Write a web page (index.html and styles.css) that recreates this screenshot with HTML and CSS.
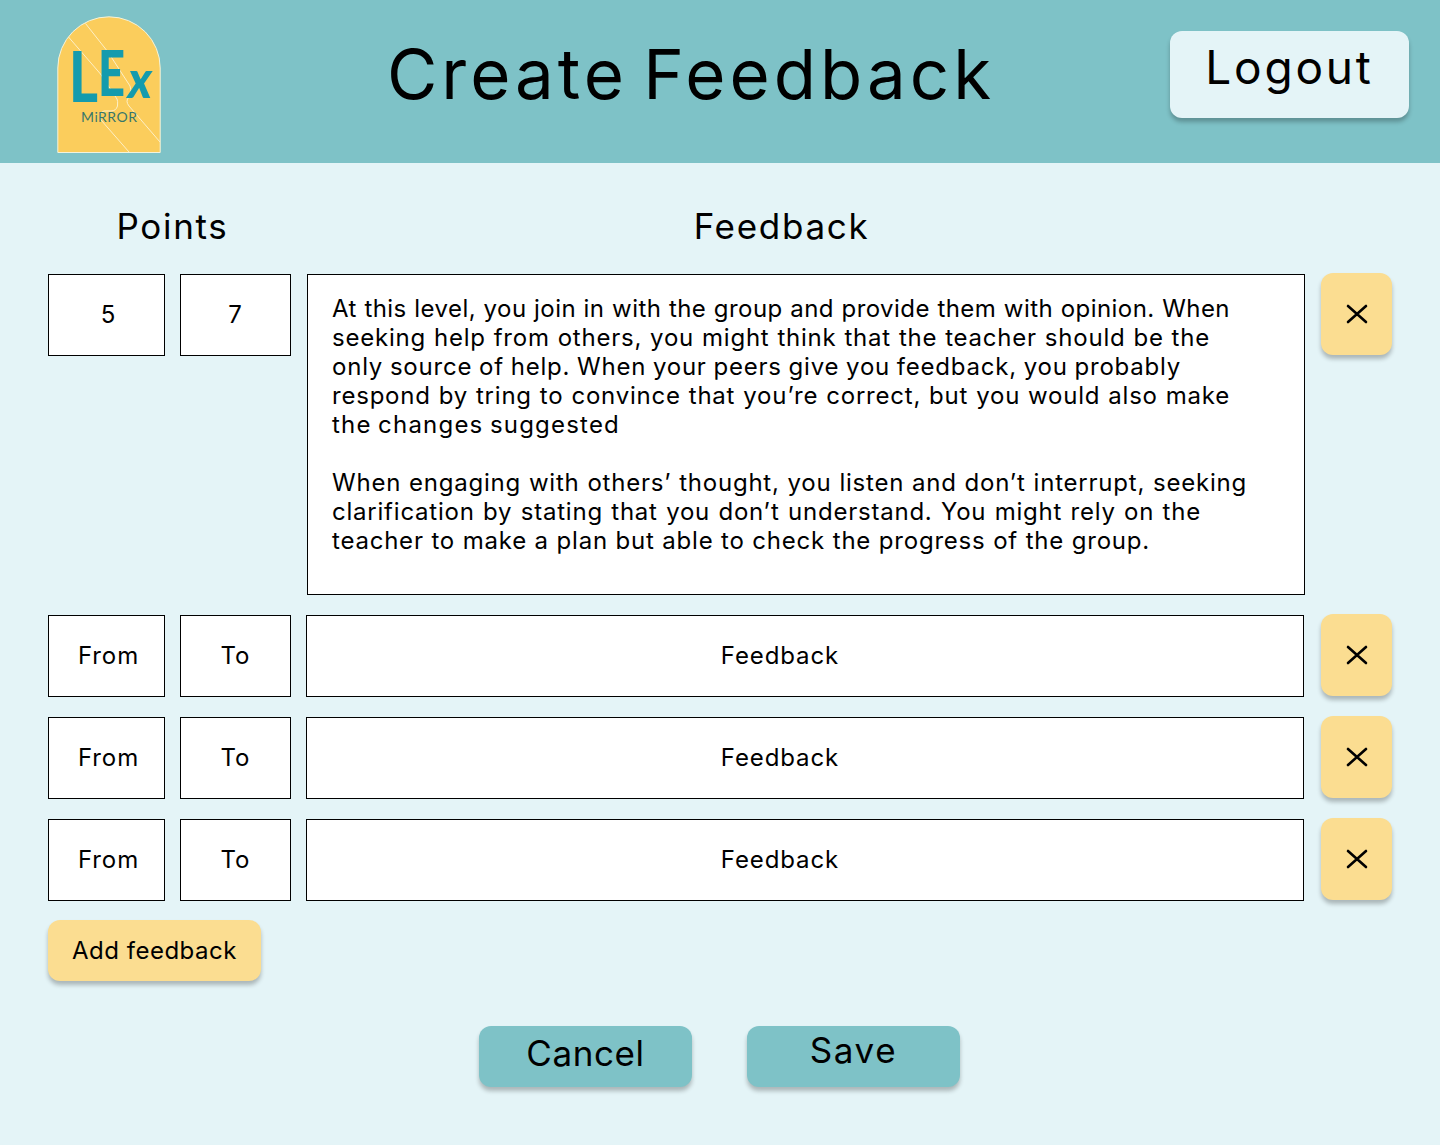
FILE: index.html
```html
<!DOCTYPE html>
<html lang="en">
<head>
<meta charset="utf-8">
<title>Create Feedback</title>
<link rel="stylesheet" href="styles.css">
</head>
<body>
<header class="header">
  <svg class="logo" viewBox="0 0 104 138" role="img" aria-label="LEx Mirror">
    <path class="arch" d="M.8 136.500V52a51.2 51.2 0 0 1 102.4 0v84.500z"/>
    <path class="trail" d="M11.5 21 L43.500 58 L60 83 Q61 85 60.500 90 Q59 95 54 95 L47 95 Q41 97 44 104 L72 136 M28.500 7.500 L51 36 L73 70 Q75 77 72 81 Q68 85 72 90 L103 126"/>
    <text class="mark"><tspan x="12" y="86" font-size="71" textLength="29" lengthAdjust="spacingAndGlyphs">L</tspan><tspan x="41" y="80" font-size="62" textLength="27" lengthAdjust="spacingAndGlyphs">E</tspan><tspan x="71" y="82" font-size="52" textLength="24" lengthAdjust="spacingAndGlyphs" font-style="italic">x</tspan><tspan class="sub" x="24" y="106" font-size="14" textLength="56">MiRROR</tspan></text>
  </svg>
  <h1 class="title">Create Feedback</h1>
  <button class="btn logout">Logout</button>
</header>
<main class="main">
  <div class="row heads">
    <h2 class="head head-points">Points</h2>
    <h2 class="head head-feedback">Feedback</h2>
  </div>
  <section class="rows">
    <div class="row filled">
      <div class="cell from">5</div>
      <div class="cell to">7</div>
      <div class="cell feedback essay">
        <span class="line lead w898">At this level, you join in with the group and provide them with opinion. When</span>
        <span class="line w878">seeking help from others, you might think that the teacher should be the</span>
        <span class="line w849">only source of help. When your peers give you feedback, you probably</span>
        <span class="line w898">respond by tring to convince that you’re correct, but you would also make</span>
        <span class="line last w288">the changes suggested</span>
        <span class="line w915 para">When engaging with others’ thought, you listen and don’t interrupt, seeking</span>
        <span class="line w869">clarification by stating that you don’t understand. You might rely on the</span>
        <span class="line w818">teacher to make a plan but able to check the progress of the group.</span>
      </div>
      <button class="btn remove" aria-label="Remove"><svg viewBox="0 0 22 20"><path d="M2 2 20 18M20 2 2 18"/></svg></button>
    </div>
    <div class="row">
      <div class="cell from">From</div><div class="cell to">To</div><div class="cell feedback">Feedback</div>
      <button class="btn remove" aria-label="Remove"><svg viewBox="0 0 22 20"><path d="M2 2 20 18M20 2 2 18"/></svg></button>
    </div>
    <div class="row">
      <div class="cell from">From</div><div class="cell to">To</div><div class="cell feedback">Feedback</div>
      <button class="btn remove" aria-label="Remove"><svg viewBox="0 0 22 20"><path d="M2 2 20 18M20 2 2 18"/></svg></button>
    </div>
    <div class="row">
      <div class="cell from">From</div><div class="cell to">To</div><div class="cell feedback">Feedback</div>
      <button class="btn remove" aria-label="Remove"><svg viewBox="0 0 22 20"><path d="M2 2 20 18M20 2 2 18"/></svg></button>
    </div>
  </section>
  <button class="btn add">Add feedback</button>
  <div class="actions">
    <button class="btn action cancel">Cancel</button>
    <button class="btn action save">Save</button>
  </div>
</main>
</body>
</html>
```
FILE: styles.css
```css
* { box-sizing: border-box; }
body {
  margin: 0;
  min-height: 1145px;
  background: #e4f4f7;
  color: #000;
  font-family: Inter, sans-serif;
  font-size: 24px;
  font-weight: 400;
}
h1, h2 { margin: 0; font-weight: 400; }
.header {
  display: flex;
  align-items: flex-start;
  height: 163px;
  padding: 16px 31px 0 57px;
  background: #7ec2c7;
}
.logo { width: 104px; height: 138px; flex: none; }
.arch { fill: #fbcd5c; stroke: #f3f3dc; stroke-width: 1; }
.trail { fill: none; stroke: #fdf0c6; stroke-width: 1; }
.mark { fill: #149bad; font-family: Lato, sans-serif; font-weight: 900; }
.sub { fill: #37776a; font-weight: 400; }
.title {
  flex: 1;
  padding: 18px 0 0 51px;
  font-size: 69px;
  line-height: 80px;
  letter-spacing: 4px;
  word-spacing: -8px;
  text-align: center;
  white-space: nowrap;
}
.btn {
  display: flex;
  align-items: center;
  justify-content: center;
  flex: none;
  padding: 0;
  border: 0;
  border-radius: 12px;
  box-shadow: 0 4px 4px rgba(0, 0, 0, .25);
  color: #000;
  font-family: inherit;
  font-weight: 400;
  white-space: nowrap;
}
.logout {
  width: 239px;
  height: 87px;
  margin-top: 15px;
  padding-bottom: 16px;
  background: #e4f4f7;
  font-size: 46px;
  letter-spacing: 2.8px;
}
.main { padding: 42px 48px 0; }
.row { display: flex; align-items: flex-start; }
.heads { height: 69px; }
.head { padding-top: 1px; font-size: 35px; line-height: 40px; letter-spacing: 1.7px; text-align: center; }
.head-points { width: 249px; }
.head-feedback { width: 969px; }
.rows { display: flex; flex-direction: column; gap: 20px; }
.cell {
  display: flex;
  align-items: center;
  justify-content: center;
  height: 82px;
  border: 1px solid #000;
  background: #fff;
  letter-spacing: .9px;
}
.from { width: 117px; margin-right: 15px; padding: 0 0 1px 4px; }
.to { width: 111px; margin-right: 15px; padding-bottom: 1px; }
.feedback { width: 998px; margin-right: 17px; padding: 0 50px 1px 0; }
.filled .to { margin-right: 16px; }
.filled .feedback { margin-right: 16px; }
.essay {
  display: block;
  height: 321px;
  padding: 19px 24px 0;
  line-height: 29px;
  letter-spacing: .78px;
  word-spacing: -4px;
}
.line { display: block; text-align-last: justify; white-space: nowrap; }
.lead { letter-spacing: .45px; }
.last { letter-spacing: 1.2px; }
.para { margin-top: 29px; }
.w898 { width: 898px; }
.w878 { width: 878px; }
.w849 { width: 849px; }
.w288 { width: 288px; }
.w915 { width: 915px; }
.w869 { width: 869px; }
.w818 { width: 818px; }
.remove { width: 71px; height: 82px; margin-top: -1px; background: #fbdd91; }
.remove svg { width: 22px; height: 20px; fill: none; stroke: #000; stroke-width: 2.6; stroke-linecap: round; }
.add {
  width: 213px;
  height: 61px;
  margin-top: 19px;
  background: #fbdd91;
  font-size: 24px;
  letter-spacing: .5px;
}
.actions { display: flex; gap: 55px; margin: 45px 0 0 431px; }
.action { width: 213px; height: 61px; background: #7ec2c7; font-size: 35px; letter-spacing: .6px; }
.cancel { padding-bottom: 7px; }
.save { padding-bottom: 13px; letter-spacing: 1.6px; }
```
